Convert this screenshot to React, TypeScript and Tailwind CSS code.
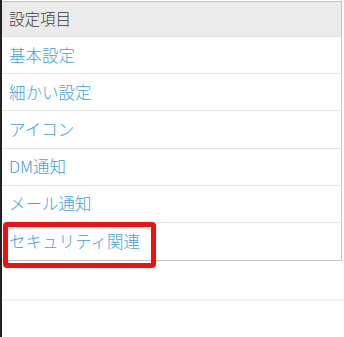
import React from "react";

const items = ["基本設定", "細かい設定", "アイコン", "DM通知", "メール通知", "セキュリティ関連"];

const App = () => {
  return (
    <div
      className="relative w-[344px] h-[337px] bg-white border-l-2 border-[#222] overflow-hidden"
      style={{fontFamily: '"Noto Sans CJK JP", "Noto Sans", sans-serif'}}
    >
      {/* Settings table */}
      <div className="mt-[1px] w-[340px] border-t border-r border-b border-[#c4c4c4]">
        <div className="h-[35px] bg-[#ebebeb] flex items-center pl-[7px] text-[15.5px] font-light text-[#3a3a3a] border-b border-[#e2e2e2]">
          設定項目
        </div>
        {items.map((item, i) => (
          <div
            key={item}
            className={`h-[37.2px] flex items-center pl-[7px] text-[16.5px] font-light text-[#42a0dc] ${i < items.length - 1 ? "border-b border-[#e4e4e4]" : ""}`}
          >
            {item}
          </div>
        ))}
      </div>

      <div className="mt-[38px] h-[2px] bg-[#f1f1f1]"/>

      {/* Highlight */}
      <div className="absolute left-[1px] top-[222px] w-[153px] h-[46px] border-[5px] border-[#ee1111] rounded-[4px]"/>
    </div>
  );
};

export default App;
